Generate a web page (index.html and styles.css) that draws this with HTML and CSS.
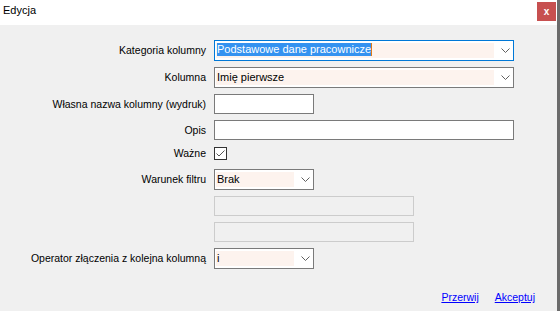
FILE: index.html
```html
<!DOCTYPE html>
<html lang="pl">
<head>
  <meta charset="UTF-8">
  <title>Edycja</title>
  <link rel="stylesheet" href="styles.css">
</head>
<body>
  <div class="window">
    <div class="titlebar">
      <span class="title">Edycja</span>
      <button class="close">x</button>
    </div>

    <form class="form">
      <div class="row">
        <label>Kategoria kolumny</label>
        <div class="combo wide focused">
          <span class="combo-text"><span class="sel">Podstawowe dane pracownicze</span><span class="caret"></span></span>
          <svg class="chevron" width="9" height="5" viewBox="0 0 9 5"><polyline points="0.5,0.5 4.5,4.5 8.5,0.5" /></svg>
        </div>
      </div>
      <div class="row">
        <label>Kolumna</label>
        <div class="combo wide">
          <span class="combo-text">Imię pierwsze</span>
          <svg class="chevron" width="9" height="5" viewBox="0 0 9 5"><polyline points="0.5,0.5 4.5,4.5 8.5,0.5" /></svg>
        </div>
      </div>
      <div class="row">
        <label>Własna nazwa kolumny (wydruk)</label>
        <input class="field short" type="text">
      </div>
      <div class="row">
        <label>Opis</label>
        <input class="field wide" type="text">
      </div>
      <div class="row row-check">
        <label>Ważne</label>
        <span class="check">
          <svg width="11" height="11" viewBox="0 0 11 11"><polyline points="1.5,5.5 4,8 9.5,2.5" /></svg>
        </span>
      </div>
      <div class="row">
        <label>Warunek filtru</label>
        <div class="combo short">
          <span class="combo-text">Brak</span>
          <svg class="chevron" width="9" height="5" viewBox="0 0 9 5"><polyline points="0.5,0.5 4.5,4.5 8.5,0.5" /></svg>
        </div>
      </div>
      <div class="row">
        <label></label>
        <input class="field mid" type="text" disabled>
      </div>
      <div class="row">
        <label></label>
        <input class="field mid" type="text" disabled>
      </div>
      <div class="row">
        <label>Operator złączenia z kolejna kolumną</label>
        <div class="combo short">
          <span class="combo-text">i</span>
          <svg class="chevron" width="9" height="5" viewBox="0 0 9 5"><polyline points="0.5,0.5 4.5,4.5 8.5,0.5" /></svg>
        </div>
      </div>
    </form>

    <div class="footer">
      <a href="#">Przerwij</a>
      <a href="#">Akceptuj</a>
    </div>
  </div>
</body>
</html>
```

FILE: styles.css
```css
body {
  margin: 0;
  background: #f0f0f0;
  font-family: 'Liberation Sans', Arial, sans-serif;
  font-size: 10.5px;
  color: #000;
}
.window {
  width: 557px;
  height: 311px;
  border-right: 3px solid #6b6b6b;
  display: flex;
  flex-direction: column;
}
.titlebar {
  height: 25px;
  background: #fff;
  display: flex;
  align-items: flex-start;
  justify-content: space-between;
}
.title {
  padding: 4px 0 0 3px;
  line-height: 13px;
  font-size: 11px;
}
.close {
  width: 19px;
  height: 19px;
  margin: 2px 1px 0 0;
  padding: 0;
  border: none;
  background: #c75050;
  color: #fff;
  font-family: 'Liberation Sans', Arial, sans-serif;
  font-size: 10px;
  font-weight: bold;
  line-height: 17px;
}
.form {
  padding-top: 15px;
  margin: 0;
}
.row {
  display: flex;
  align-items: center;
  margin-bottom: 6px;
}
.row label {
  width: 206px;
  flex-shrink: 0;
  margin-right: 8px;
  text-align: right;
  line-height: 13px;
  white-space: nowrap;
}
.row-check {
  height: 17px;
  align-items: flex-start;
}
.row-check label {
  margin-top: 1px;
}
.wide { width: 300px; }
.mid { width: 200px; }
.short { width: 100px; }

.combo {
  box-sizing: border-box;
  height: 21px;
  border: 1px solid #7a7a7a;
  background: #fff;
  padding: 2px 0 2px 1px;
  display: flex;
  align-items: stretch;
}
.combo.focused {
  border-color: #0078d7;
}
.combo-text {
  flex: 1;
  background: #fdf3ee;
  font-size: 11px;
  line-height: 15px;
  padding-left: 1px;
  white-space: nowrap;
  overflow: hidden;
}
.sel {
  display: inline-block;
  vertical-align: top;
  line-height: 13px;
  background: #3492f0;
  color: #fff;
}
.caret {
  display: inline-block;
  vertical-align: top;
  width: 1px;
  height: 13px;
  background: #e07a16;
}
.chevron {
  width: 9px;
  height: 5px;
  flex-shrink: 0;
  margin: 5px 3px 0 7px;
}
.chevron polyline {
  fill: none;
  stroke: #606060;
  stroke-width: 1;
}
.field {
  box-sizing: border-box;
  height: 20px;
  margin: 0;
  border: 1px solid #7a7a7a;
  background: #fff;
  font-family: 'Liberation Sans', Arial, sans-serif;
  font-size: 11px;
  padding: 0 2px;
  outline: none;
}
.field:disabled {
  border-color: #cccccc;
  background: #f0f0f0;
}
.check {
  box-sizing: border-box;
  width: 13px;
  height: 13px;
  margin-top: 1px;
  border: 1px solid #333;
  background: #fff;
  display: block;
}
.check svg {
  display: block;
}
.check polyline {
  fill: none;
  stroke: #555;
  stroke-width: 1;
}
.footer {
  margin-top: auto;
  padding: 0 22px 7px 0;
  display: flex;
  justify-content: flex-end;
  gap: 16px;
}
.footer a {
  color: #0000ff;
  font-size: 10.5px;
  line-height: 13px;
}
```
